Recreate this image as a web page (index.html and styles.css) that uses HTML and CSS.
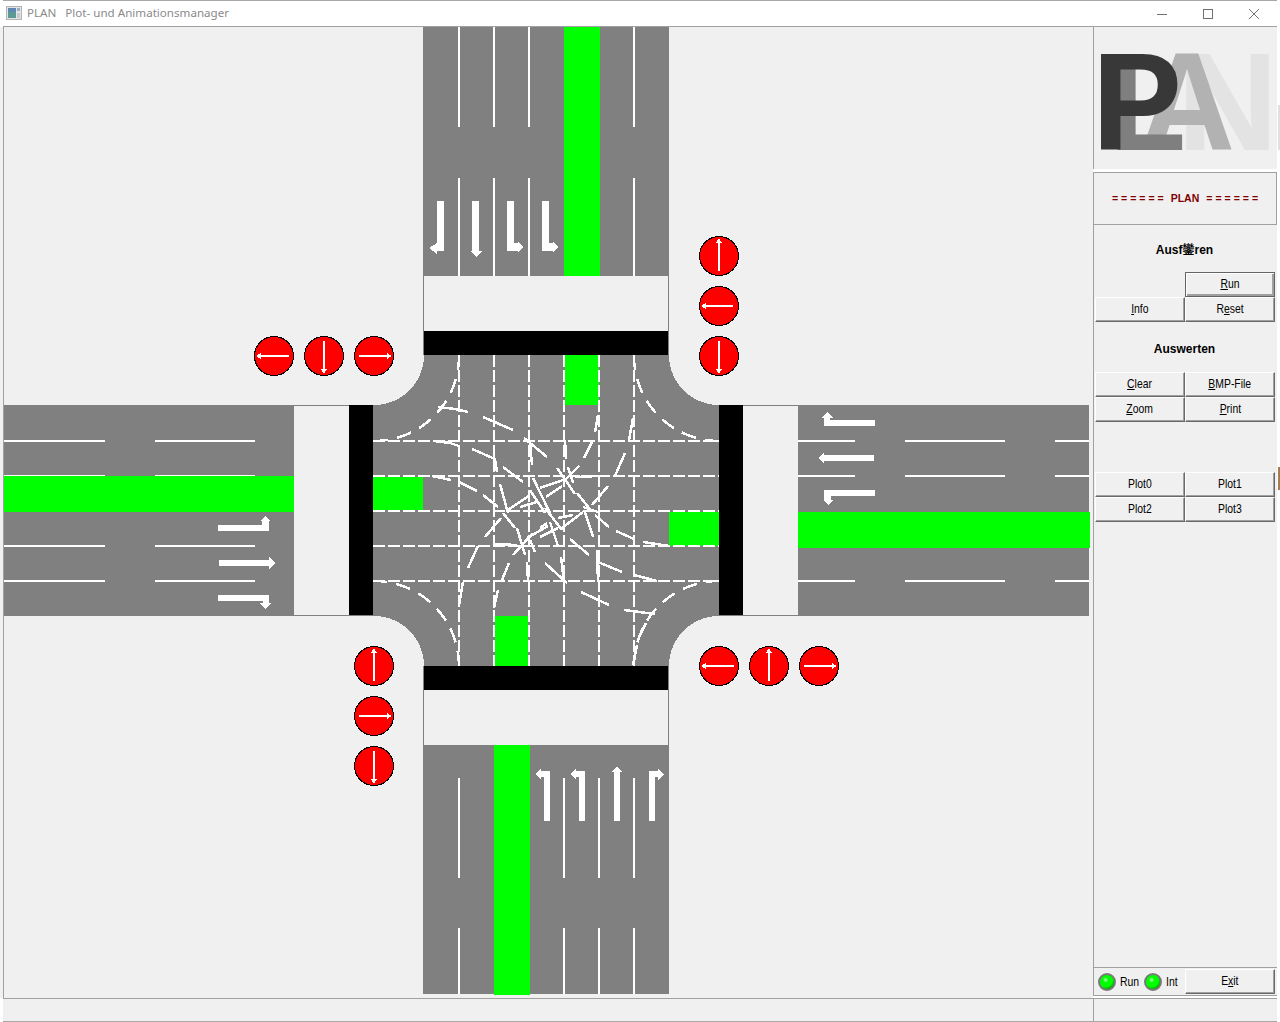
FILE: index.html
```html
<!DOCTYPE html>
<html lang="de">
<head>
<meta charset="utf-8">
<title>PLAN Plot- und Animationsmanager</title>
<link rel="stylesheet" href="styles.css">
</head>
<body>
<div class="window">
  <header class="titlebar">
    <svg class="app-icon" viewBox="0 0 16 14" width="16" height="14">
      <rect x="0.5" y="0.5" width="15" height="13" fill="#e4e4e4" stroke="#b4b4b4"/>
      <rect x="2" y="2" width="8" height="10" fill="#5c9a94"/>
      <rect x="2" y="2" width="8" height="4" fill="#5f88b0"/>
      <rect x="11" y="2" width="3" height="3" fill="#9ab0c8"/>
      <rect x="11" y="7" width="3" height="5" fill="#c4ccd0"/>
    </svg>
    <span class="title-text"><span class="title-app">PLAN</span>Plot- und Animationsmanager</span>
    <div class="win-controls">
      <svg viewBox="0 0 12 12" width="12" height="12"><path class="win-stroke" d="M1 6.500H11"/></svg>
      <svg viewBox="0 0 12 12" width="12" height="12"><rect class="win-stroke" x="1.500" y="1.500" width="9" height="9"/></svg>
      <svg viewBox="0 0 12 12" width="12" height="12"><path class="win-stroke" d="M1 1L11 11M11 1L1 11"/></svg>
    </div>
  </header>
  <div class="main">
    <div class="canvas">
      <svg class="junction" viewBox="4 27 1086 970" width="1086" height="970">
        <!-- roads -->
        <rect class="asphalt" x="423" y="27" width="246" height="967"/>
        <rect class="asphalt" x="4" y="405" width="1085" height="211"/>
        <rect class="asphalt" x="373" y="355" width="346" height="311"/>
        <path class="pave" d="M373,355H424A50,50 0 0 1 374,405H373Z"/>
        <path class="pave" d="M719,355H669A50,50 0 0 0 719,405Z"/>
        <path class="pave" d="M373,666H424A50,50 0 0 0 374,616H373Z"/>
        <path class="pave" d="M719,666H669A50,50 0 0 1 719,616Z"/>

        <!-- crosswalks -->
        <rect class="pave" x="424" y="276" width="244" height="55"/>
        <rect class="pave" x="424" y="690" width="244" height="55"/>
        <rect class="pave" x="294" y="406" width="55" height="209"/>
        <rect class="pave" x="743" y="406" width="55" height="209"/>

        <!-- stop bars -->
        <rect class="stop" x="424" y="331" width="244" height="24"/>
        <rect class="stop" x="424" y="666" width="244" height="24"/>
        <rect class="stop" x="349" y="405" width="24" height="210"/>
        <rect class="stop" x="719" y="405" width="24" height="210"/>

        <!-- lane lines -->
        <path class="lane" d="M459,27V127M459,178V276M494,27V127M494,178V276M529,27V127M529,178V276M634,27V127M634,178V276"/>
        <path class="lane" d="M459,778V878M459,928V994M564,778V878M564,928V994M599,778V878M599,928V994M634,778V878M634,928V994"/>
        <path class="lane" d="M4,441H105M155,441H255M4,476H105M155,476H255M4,546H105M155,546H255M4,581H105M155,581H255"/>
        <path class="lane" d="M798,441H855M905,441H1005M1055,441H1089M798,476H855M905,476H1005M1055,476H1089M798,581H855M905,581H1005M1055,581H1089"/>

        <!-- green phases -->
        <rect class="go" x="564" y="27" width="36" height="249"/>
        <rect class="go" x="494" y="745" width="36" height="250"/>
        <rect class="go" x="4" y="476" width="290" height="36"/>
        <rect class="go" x="798" y="512" width="292" height="36"/>
        <rect class="go" x="565" y="355" width="34" height="50"/>
        <rect class="go" x="495" y="616" width="33" height="50"/>
        <rect class="go" x="373" y="477" width="50" height="33"/>
        <rect class="go" x="669" y="512" width="50" height="34"/>

        <!-- dashed grid -->
        <path class="dash" d="M459,355V666M494,355V666M529,355V666M564,355V666M599,355V666M634,355V666"/>
        <path class="dash" d="M373,441H719M373,476H719M373,511H719M373,546H719M373,581H719"/>

        <!-- turning paths -->
        <path class="arc" d="M459,355A85,85 0 0 1 374,441"/>
        <path class="arc" d="M634,355A85,85 0 0 0 719,441"/>
        <path class="arc" d="M459,666A85,85 0 0 0 374,581"/>
        <path class="arc" d="M634,666A85,85 0 0 1 719,581"/>
        <path class="trace" d="M438,407L455,409L468,412M483,417L513,430M434,441L450,443L459,446M472,449L495,459L497,472M503,467L523,482M524,438L547,457M530,442L532,465M432,476L451,480M459,482L477,491M483,495L498,507M500,484L508,513M533,478L550,513M530,490L545,513M508,510L530,495M520,507L537,502M540,488L548,485"/>
        <path class="trace" d="M598,415L595,432M633,418L629,440M565,440L566,459M592,442L584,458M625,453L615,476M557,468L575,494M568,467L573,483M579,466L563,482M575,477L598,476M540,488L563,480M546,497L562,486M577,493L589,508M608,486L592,505M583,507L598,512"/>
        <path class="trace" d="M494,544L517,545M503,513L515,528M501,518L485,537M527,538L548,526M517,528L525,555M513,555L533,533M530,540L535,552M478,546L468,568M509,563L502,580M527,562L528,580M463,582L459,605M498,590L494,608"/>
        <path class="trace" d="M545,563L567,583M561,557L564,582M570,539L589,555M550,522L558,546M545,508L562,530M540,528L547,523M540,537L558,528M558,518L573,515M562,528L583,512M585,512L593,537M595,515L609,527M616,531L634,539M643,542L669,546M598,562L622,572M597,550L598,582M634,575L657,581M581,592L609,605M624,610L655,614M646,623L639,637M637,645L633,665"/>

        <!-- road arrows: north arm -->
        <polygon class="mark" points="437,201 444,201 444,251 437,251 437,254 429,248 437,243"/>
        <polygon class="mark" points="472,201 479,201 479,251 482,251 476,257 470,251 472,251"/>
        <polygon class="mark" points="507,201 514,201 514,243 518,243 518,241 523,247 518,253 518,251 507,251"/>
        <polygon class="mark" points="542,201 549,201 549,243 553,243 553,241 558,247 553,253 553,251 542,251"/>
        <!-- south arm -->
        <polygon class="mark" points="544,821 550,821 550,771 541,771 541,769 535,774 541,780 541,777 544,777"/>
        <polygon class="mark" points="579,821 585,821 585,771 576,771 576,769 570,774 576,780 576,777 579,777"/>
        <polygon class="mark" points="614,821 620,821 620,772 622,772 617,766 612,772 614,772"/>
        <polygon class="mark" points="649,821 655,821 655,777 658,777 658,780 664,774 658,769 658,771 649,771"/>
        <!-- west arm -->
        <polygon class="mark" points="218,525 262,525 262,521 260,521 265,516 270,521 269,521 269,531 218,531"/>
        <polygon class="mark" points="219,560 269,560 269,557 275,563 269,569 269,566 219,566"/>
        <polygon class="mark" points="218,595 269,595 269,603 272,603 265,609 260,603 263,603 263,601 218,601"/>
        <!-- east arm -->
        <polygon class="mark" points="875,496 831,496 831,500 833,500 828,505 823,500 824,500 824,490 875,490"/>
        <polygon class="mark" points="874,461 824,461 824,464 818,458 824,452 824,455 874,455"/>
        <polygon class="mark" points="875,426 824,426 824,418 821,418 828,412 833,418 830,418 830,420 875,420"/>

        <!-- signals -->
        <g class="signal">
          <circle cx="719" cy="256" r="19.500"/><circle cx="719" cy="306" r="19.500"/><circle cx="719" cy="356" r="19.500"/>
          <circle cx="274" cy="356" r="19.500"/><circle cx="324" cy="356" r="19.500"/><circle cx="374" cy="356" r="19.500"/>
          <circle cx="719" cy="666" r="19.500"/><circle cx="769" cy="666" r="19.500"/><circle cx="819" cy="666" r="19.500"/>
          <circle cx="374" cy="666" r="19.500"/><circle cx="374" cy="716" r="19.500"/><circle cx="374" cy="766" r="19.500"/>
        </g>
        <path class="needle" d="M719,271V242M733,306H705M719,341V370"/>
        <path class="needle" d="M289,356H260M324,341V370M359,356H388"/>
        <path class="needle" d="M734,666H705M769,681V652M804,666H833"/>
        <path class="needle" d="M374,681V652M359,716H388M374,751V780"/>
        <path class="mark" d="M716,243L719,238L722,243ZM706,303L701,306L706,309ZM716,369L719,374L722,369Z"/>
        <path class="mark" d="M261,353L256,356L261,359ZM321,369L324,374L327,369ZM387,353L392,356L387,359Z"/>
        <path class="mark" d="M706,663L701,666L706,669ZM766,653L769,648L772,653ZM832,663L837,666L832,669Z"/>
        <path class="mark" d="M371,653L374,648L377,653ZM387,713L392,716L387,719ZM371,779L374,784L377,779Z"/>
      </svg>
    </div>

    <aside class="sidebar">
      <div class="logo-panel">
        <svg class="logo" viewBox="0 0 184 142" width="184" height="142">
          <text class="logo-n" x="84" y="123" textLength="101" lengthAdjust="spacingAndGlyphs">N</text>
          <text class="logo-a" x="46" y="123" textLength="96" lengthAdjust="spacingAndGlyphs">A</text>
          <text class="logo-l" x="16" y="123" textLength="77" lengthAdjust="spacingAndGlyphs">L</text>
          <text class="logo-p" x="-1" y="123" textLength="90" lengthAdjust="spacingAndGlyphs">P</text>
        </svg>
      </div>
      <div class="message-panel"><span class="eq">======</span><span class="msg-name">PLAN</span><span class="eq">======</span></div>
      <div class="control-panel">
        <h2 class="section-title section-first">Ausf<span class="garbled">鑾</span>ren</h2>
        <div class="btn-grid">
          <span></span>
          <button class="btn btn-default"><span class="lbl"><u>R</u>un</span></button>
          <button class="btn"><span class="lbl"><u>I</u>nfo</span></button>
          <button class="btn"><span class="lbl">R<u>e</u>set</span></button>
        </div>
        <h2 class="section-title section-gap">Auswerten</h2>
        <div class="btn-grid">
          <button class="btn"><span class="lbl"><u>C</u>lear</span></button>
          <button class="btn"><span class="lbl"><u>B</u>MP-File</span></button>
          <button class="btn"><span class="lbl"><u>Z</u>oom</span></button>
          <button class="btn"><span class="lbl"><u>P</u>rint</span></button>
        </div>
        <div class="btn-grid plot-grid">
          <button class="btn"><span class="lbl">Plot0</span></button>
          <button class="btn"><span class="lbl">Plot1</span></button>
          <button class="btn"><span class="lbl">Plot2</span></button>
          <button class="btn"><span class="lbl">Plot3</span></button>
        </div>
      </div>
      <div class="status-panel">
        <span class="led"></span><span class="led-label"><span class="lbl lbl-left">Run</span></span>
        <span class="led"></span><span class="led-label led-label-last"><span class="lbl lbl-left">Int</span></span>
        <button class="btn btn-exit"><span class="lbl">E<u>x</u>it</span></button>
      </div>
    </aside>
  </div>
  <footer class="statusbar"><div class="status-left"></div><div class="status-right"></div></footer>
  <div class="desk-bit desk-gray"></div>
  <div class="desk-bit desk-brown"></div>
</div>
</body>
</html>
```
FILE: styles.css
```css
* { box-sizing: border-box; }
html, body { margin: 0; padding: 0; }
body { width: 1280px; height: 1022px; overflow: hidden; background: #fff; font-family: "Liberation Sans", Arial, sans-serif; }

.window { position: relative; width: 1280px; height: 1022px; display: flex; flex-direction: column; }

.titlebar {
  height: 27px; width: 1274px; flex: none; display: flex; align-items: center;
  background: #fff; border-top: 1px solid #a8a8a8; border-bottom: 1px solid #a0a0a0;
  margin-left: 3px; padding: 0 0 2px 3px;
}
.app-icon { flex: none; margin-right: 5px; }
.title-text { font: 11.600px "Noto Sans", "Open Sans", sans-serif; color: #8a8a8a; white-space: nowrap; }
.title-app { margin-right: 9px; }
.win-controls { margin-left: auto; display: flex; gap: 34px; padding-right: 17px; padding-top: 2px; }
.win-stroke { fill: none; stroke: #707070; stroke-width: 1; }

.main { flex: none; height: 971px; display: flex; width: 1277px; }
.canvas { width: 1093px; flex: none; padding-left: 3px; background: #f0f0f0; position: relative; }
.canvas::before { content: ""; position: absolute; left: 3px; top: 0; bottom: 0; width: 1px; background: #a0a0a0; }
.junction { display: block; margin-left: 1px; background: #f0f0f0; shape-rendering: crispEdges; }

.asphalt { fill: #808080; }
.pave { fill: #f0f0f0; }
.stop { fill: #000; }
.go { fill: #0f0; }
.lane { stroke: #fff; stroke-width: 2; fill: none; }
.dash { stroke: #fff; stroke-width: 2; fill: none; stroke-dasharray: 12 3; }
.arc { stroke: #fff; stroke-width: 2.500; fill: none; stroke-dasharray: 15 9; }
.trace { stroke: #fff; stroke-width: 2.500; fill: none; }
.mark { fill: #fff; }
.signal circle { fill: #f00; stroke: #000; stroke-width: 1; }
.needle { stroke: #fff; stroke-width: 2; fill: none; }

.sidebar { width: 184px; flex: none; display: flex; flex-direction: column; }
.logo-panel { height: 142px; flex: none; border-left: 1px solid #a0a0a0; margin-bottom: 3px; background: #f0f0f0; }
.logo { display: block; margin-left: -1px; overflow: visible; }
.logo text { font: bold 139.500px "Liberation Sans", Arial, sans-serif; }
.logo-p { fill: #383838; }
.logo-l { fill: #7f7f7f; }
.logo-a { fill: #b2b2b2; }
.logo-n { fill: #e3e3e3; }

.message-panel {
  height: 53px; flex: none; display: flex; align-items: center; justify-content: center; gap: 7px;
  border: 1px solid #a0a0a0; background: #f0f0f0; color: #800000; font-weight: bold; font-size: 10.500px; padding-bottom: 2px;
}
.eq { letter-spacing: 3px; margin-right: -3px; }

.control-panel { flex: 1; border-left: 1px solid #a0a0a0; background: #f0f0f0; padding: 12px 0 0 1px; }
.section-title { margin: 0 0 11px; height: 24px; line-height: 24px; font-size: 12px; font-weight: bold; text-align: center; width: 179px; color: #000; }
.section-first { line-height: 23px; }
.garbled { font-family: "Noto Sans CJK SC", sans-serif; font-size: 12px; font-weight: bold; }
.section-gap { margin-top: 15px; }
.btn-grid { display: grid; grid-template-columns: 90px 90px; grid-auto-rows: 25px; }
.plot-grid { margin-top: 50px; }

.btn {
  padding: 0 0 2px; margin: 0; background: #f0f0f0; color: #000;
  font-family: "Liberation Sans", Arial, sans-serif; font-size: 13px;
  border: 1px solid; border-color: #fff #696969 #696969 #fff;
  box-shadow: inset -1px -1px 0 #a0a0a0;
}
.btn-default { border-color: #646464; box-shadow: inset 1px 1px 0 #fff, inset -2px -2px 0 #a0a0a0; }
.lbl { display: inline-block; transform: scaleX(0.8); }
.lbl-left { transform-origin: left center; }

.status-panel {
  height: 29px; flex: none; display: flex; align-items: center; margin-bottom: 2px;
  border-left: 1px solid #a0a0a0; border-top: 1px solid #a0a0a0; border-bottom: 1px solid #a0a0a0; background: #f0f0f0; padding: 0 2px 0 4px;
}
.led {
  width: 18px; height: 18px; flex: none; border-radius: 50%;
  background: radial-gradient(circle at 40% 35%, #8f8 0 8%, #0f0 22% 55%, #0a0 75%);
  border: 2px solid #7a7a7a; margin-right: 3.500px;
}
.led-label { flex: none; font-size: 13px; color: #000; margin-right: 3.500px; width: 21px; white-space: nowrap; }
.led-label-last { width: 16px; margin-right: 0; }
.btn-exit { flex: none; width: 90px; height: 25px; margin-left: auto; }

.statusbar { flex: none; height: 24px; width: 1274px; display: flex; background: #f0f0f0; border-top: 1px solid #a0a0a0; border-bottom: 1px solid #a8a8a8; margin-left: 3px; }
.status-left { width: 1091px; border-right: 1px solid #a0a0a0; }
.status-right { flex: 1; }

.desk-bit { position: absolute; left: 1278px; width: 2px; }
.desk-gray { top: 105px; height: 45px; background: #e0e0e0; }
.desk-brown { top: 467px; height: 23px; background: #a67c52; }
```
